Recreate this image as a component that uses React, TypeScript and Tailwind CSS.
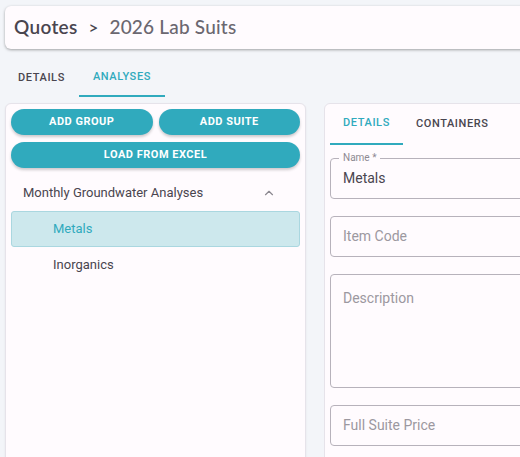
import { ChevronUp } from "lucide-react"

const teal = "bg-[#30aabd]"

function Field({ label, value, tall }: { label: string; value?: string; tall?: boolean }) {
  if (value) {
    return (
      <div className="relative h-[41px] rounded-[4px] border border-[#b7b2bb] flex items-center pl-[12px]">
        <span className="absolute -top-[7px] left-[8px] px-[4px] bg-[#fffbfe] text-[10px] leading-[12px] text-[#8e8a92]">
          {label}
        </span>
        <span className="text-[14px] text-[#49454f]">{value}</span>
      </div>
    )
  }
  return (
    <div
      className={`rounded-[4px] border border-[#b7b2bb] pl-[12px] ${
        tall ? "h-[114px] pt-[11px]" : "h-[41px] flex items-center"
      }`}
    >
      <span className="text-[14px] text-[#9c98a0]">{label}</span>
    </div>
  )
}

export default function App() {
  return (
    <div className="w-[520px] h-[457px] overflow-hidden bg-[#f3f5f9] font-['Roboto',sans-serif]">
      <div className="w-[640px] pt-[6px] pl-[5px]">
        <div className="h-[43px] rounded-[6px] bg-[#fffbfe] shadow-[0_1px_3px_rgba(0,0,0,0.35)] flex items-center pl-[9px]">
          <span className="font-['Lato',sans-serif] text-[19px] font-semibold text-[#49454f] tracking-[0.3px]">
            Quotes
          </span>
          <span className="font-['Lato',sans-serif] text-[17px] font-semibold text-[#49454f] mx-[11px]">
            &gt;
          </span>
          <span className="font-['Lato',sans-serif] text-[19px] font-medium text-[#6b6770] tracking-[0.2px]">
            2026 Lab Suits
          </span>
        </div>

        <div className="flex mt-[11px] -ml-[1px] h-[37px] text-[11px] font-medium tracking-[0.6px]">
          <div className="px-[14px] flex items-center text-[#49454f]">DETAILS</div>
          <div className="px-[14px] flex items-center text-[#30aabd] border-b-2 border-[#30aabd]">ANALYSES</div>
        </div>

        <div className="flex gap-[18px] mt-[6px]">
          <div className="w-[301px] h-[400px] shrink-0 rounded-[6px] bg-[#fffbfe] border border-[#e6e3ea] shadow-[0_1px_2px_rgba(0,0,0,0.08)] p-[5px]">
            <div className="grid grid-cols-2 gap-x-[6px] gap-y-[7px]">
              <button className={`${teal} h-[26px] rounded-full text-white text-[11px] font-bold tracking-[0.5px] shadow-[0_2px_3px_rgba(0,0,0,0.2)]`}>
                ADD GROUP
              </button>
              <button className={`${teal} h-[26px] rounded-full text-white text-[11px] font-bold tracking-[0.5px] shadow-[0_2px_3px_rgba(0,0,0,0.2)]`}>
                ADD SUITE
              </button>
              <button className={`${teal} col-span-2 h-[26px] rounded-full text-white text-[11px] font-bold tracking-[0.5px] shadow-[0_2px_3px_rgba(0,0,0,0.2)]`}>
                LOAD FROM EXCEL
              </button>
            </div>
            <div className="h-[43px] flex items-center justify-between pt-[6px] pl-[12px] pr-[24px] text-[13px] text-[#49454f]">
              <span>Monthly Groundwater Analyses</span>
              <ChevronUp size={14} strokeWidth={2} className="text-[#8c8890]" />
            </div>
            <div className="h-[36px] rounded-[3px] bg-[#cde8ed] border border-[#aad7e0] flex items-center pl-[41px] text-[13px] text-[#30aabd]">
              Metals
            </div>
            <div className="h-[36px] flex items-center pl-[42px] text-[13px] text-[#49454f]">
              Inorganics
            </div>
          </div>

          <div className="w-[280px] h-[400px] shrink-0 rounded-[6px] bg-[#fffbfe] border border-[#e6e3ea] px-[5px]">
            <div className="flex h-[41px] text-[11px] font-medium tracking-[0.6px]">
              <div className="px-[13px] flex items-center text-[#30aabd] border-b-2 border-[#30aabd]">DETAILS</div>
              <div className="px-[13px] flex items-center text-[#49454f]">CONTAINERS</div>
            </div>
            <div className="flex flex-col gap-[17px] mt-[13px]">
              <Field label="Name *" value="Metals" />
              <Field label="Item Code" />
              <Field label="Description" tall />
              <Field label="Full Suite Price" />
            </div>
          </div>
        </div>
      </div>
    </div>
  )
}
